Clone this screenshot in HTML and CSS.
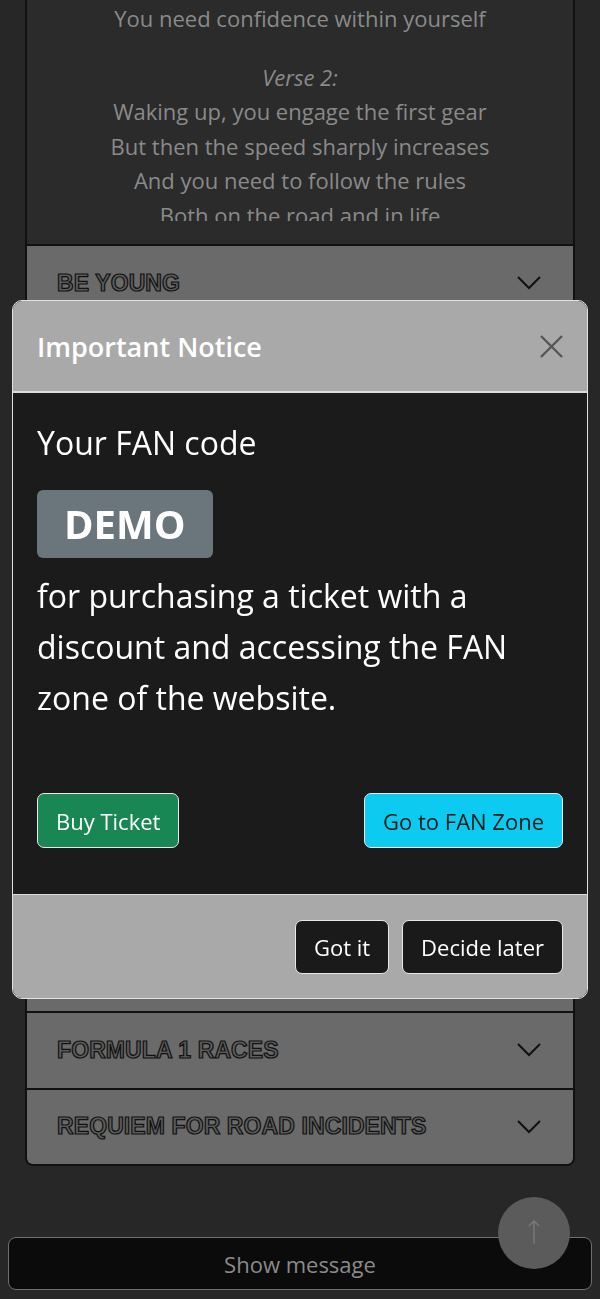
FILE: index.html
```html
<!DOCTYPE html>
<html lang="en">
  <head>
    <meta charset="UTF-8" />
    <meta name="viewport" content="width=device-width, initial-scale=1.0" />
    <title>Songs</title>
    <link rel="stylesheet" href="styles.css">
  </head>
  <body>
    <div id="songs">
      <div class="song-body">
        <div class="lyrics">
          <p>You need confidence within yourself</p>
          <p class="verse">Verse 2:</p>
          <p>Waking up, you engage the first gear</p>
          <p>But then the speed sharply increases</p>
          <p>And you need to follow the rules</p>
          <p>Both on the road and in life</p>
        </div>
      </div>
      <div class="song-head"><span>BE YOUNG</span><svg class="chevron" viewBox="0 0 24 14"><path d="M1 1 L12 12 L23 1" /></svg></div>
      <!-- rows hidden behind the notice -->
      <div class="song-head"></div>
      <div class="song-head"></div>
      <div class="song-head"></div>
      <div class="song-head"></div>
      <div class="song-head"></div>
      <div class="song-head"></div>
      <div class="song-head"></div>
      <div class="song-head"></div>
      <div class="song-head"></div>
      <div class="song-head"><span>FORMULA 1 RACES</span><svg class="chevron" viewBox="0 0 24 14"><path d="M1 1 L12 12 L23 1" /></svg></div>
      <div class="song-head"><span>REQUIEM FOR ROAD INCIDENTS</span><svg class="chevron" viewBox="0 0 24 14"><path d="M1 1 L12 12 L23 1" /></svg></div>
    </div>

    <button id="show-message">Show message</button>
    <button id="to-top">
      <svg viewBox="0 0 20 40"><path d="M10 38 V3 M2 11 L10 3 L18 11" /></svg>
    </button>

    <div id="modal">
      <div class="modal-head">
        <div class="modal-title">Important Notice</div>
        <svg class="close" viewBox="0 0 24 24"><path d="M1 1 L23 23 M23 1 L1 23" /></svg>
      </div>
      <div class="modal-body">
        <div class="code-label">Your FAN code</div>
        <div class="code">DEMO</div>
        <p class="code-text">for purchasing a ticket with a discount and accessing the FAN zone of the website.</p>
        <div class="modal-actions">
          <button class="btn btn-green">Buy Ticket</button>
          <button class="btn btn-cyan">Go to FAN Zone</button>
        </div>
      </div>
      <div class="modal-foot">
        <button class="btn btn-dark">Got it</button>
        <button class="btn btn-dark">Decide later</button>
      </div>
    </div>
  </body>
</html>
```

FILE: styles.css
```css
body {
  margin: 0;
  padding: 0;
  background-color: #272727;
  font-family: "Open Sans", "Noto Sans", sans-serif;
}
#songs {
  margin: 0 25px;
  border: 2px solid #111;
  border-top: none;
  border-radius: 0 0 8px 8px;
  overflow: hidden;
}
.song-body {
  background-color: #2b2b2b;
  padding-bottom: 23px;
}
.lyrics {
  height: 221px;
  overflow: hidden;
  text-align: center;
  color: #8a8a8a;
  font-size: 22px;
}
.lyrics p {
  margin: 0;
  line-height: 34.5px;
}
.lyrics p:first-child {
  margin-top: 1px;
}
.lyrics p.verse {
  margin-top: 24px;
  font-style: italic;
}
.song-head {
  display: flex;
  align-items: center;
  justify-content: space-between;
  height: 74.7px;
  padding: 0 30px;
  border-top: 2px solid #111;
  background-color: #6a6a6a;
}
.song-head span {
  font-family: "Liberation Sans", Arial, sans-serif;
  font-weight: bold;
  font-size: 23px;
  letter-spacing: 0.1px;
  color: #5c5c5c;
  -webkit-text-stroke: 1.2px #111;
}
.chevron {
  width: 24px;
  height: 14px;
  margin-right: 2px;
  fill: none;
  stroke: #111;
  stroke-width: 2;
}
#show-message {
  position: fixed;
  left: 8px;
  right: 8px;
  bottom: 9px;
  height: 53px;
  background-color: #0b0b0b;
  border: 1px solid #707070;
  border-radius: 8px;
  color: #8a8a8a;
  font-family: inherit;
  font-size: 22px;
}
#to-top {
  position: fixed;
  left: 498px;
  top: 1197px;
  width: 72px;
  height: 72px;
  border: none;
  border-radius: 50%;
  background-color: #5b5b5b;
  padding: 0;
}
#to-top svg {
  width: 18px;
  height: 26px;
  fill: none;
  stroke: #7c7c7c;
  stroke-width: 2;
}
#modal {
  position: fixed;
  top: 300px;
  left: 12px;
  right: 12px;
  border: 1px solid #e2e2e2;
  border-radius: 10px;
  overflow: hidden;
}
.modal-head {
  display: flex;
  align-items: center;
  justify-content: space-between;
  height: 90px;
  padding: 0 24px;
  background-color: #a9a9a9;
  border-bottom: 2px solid #dcdcdc;
}
.modal-title {
  color: #fff;
  font-size: 27px;
  font-weight: 600;
}
.close {
  width: 23px;
  height: 23px;
  fill: none;
  stroke: #555;
  stroke-width: 2.4;
}
.modal-body {
  background-color: #1b1b1b;
  padding: 24px 24px 46px;
  color: #fff;
}
.code-label {
  font-size: 32px;
  line-height: 52px;
}
.code {
  display: inline-block;
  margin-top: 21px;
  padding: 0 27px;
  height: 68px;
  line-height: 68px;
  background-color: #6b757c;
  border-radius: 6px;
  font-size: 40px;
  font-weight: bold;
}
.code-text {
  margin: 12px 0 0;
  font-size: 32px;
  line-height: 51px;
}
.modal-actions {
  display: flex;
  justify-content: space-between;
  margin-top: 70px;
}
.btn {
  height: 55px;
  padding: 0 18px;
  border: 1px solid #e8e8e8;
  border-radius: 7px;
  font-family: inherit;
  font-size: 22px;
}
.btn-green {
  background-color: #198754;
  color: #fff;
}
.btn-cyan {
  background-color: #0dcaf0;
  color: #1a1a1a;
}
.modal-foot {
  display: flex;
  justify-content: flex-end;
  gap: 13px;
  padding: 25px 24px 24px;
  background-color: #a9a9a9;
  border-top: 1px solid #dcdcdc;
}
.btn-dark {
  height: 54px;
  background-color: #1a1a1a;
  color: #fff;
}
```
